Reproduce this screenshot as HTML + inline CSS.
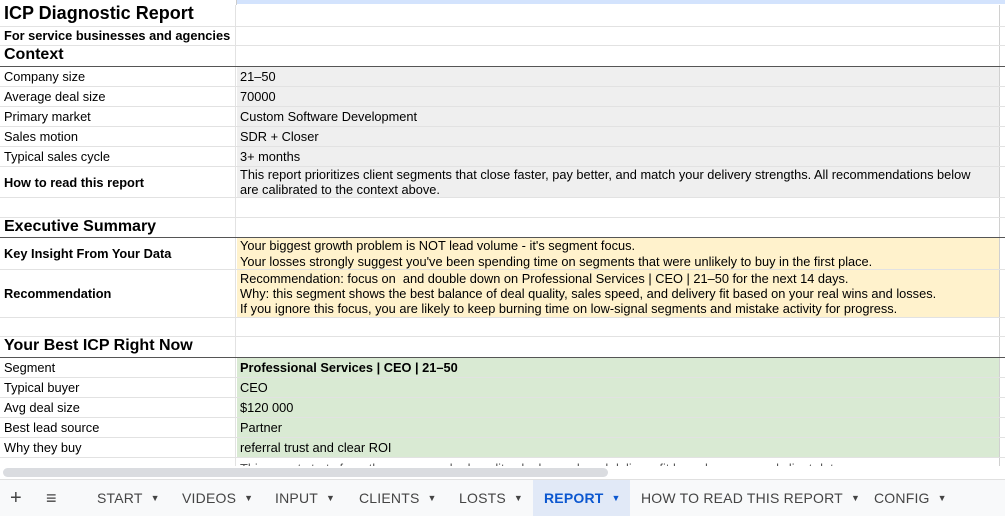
<!DOCTYPE html>
<html><head><meta charset="utf-8"><style>
*{margin:0;padding:0;box-sizing:border-box}
body{width:1005px;height:516px;overflow:hidden;background:#fff;font-family:"Liberation Sans",Arial,sans-serif;font-size:12.8px;color:#000;position:relative}
.r{position:absolute;left:0;width:1005px;border-bottom:1px solid #e2e2e2}
.a,.b{position:absolute;top:0;bottom:0;display:flex;align-items:flex-end;padding-bottom:2px;white-space:nowrap;overflow:hidden}
.a{left:0;width:236px;padding-left:4px;border-right:1px solid #e2e2e2}
.b{left:237px;width:763px;padding-left:3px;border-right:1px solid #d0d0d0}
.m{align-items:center;padding-bottom:0;line-height:15px;white-space:normal}
.g{background:#efefef}.y{background:#fff2cc}.gr{background:#d9ead3}
.bd{font-weight:bold}
.dk{border-bottom:1px solid #555}
.tab{position:absolute;top:480px;height:36px;display:flex;align-items:center;font-size:14px;color:#444;letter-spacing:0.2px}
.tab span{font-size:9px;margin-left:8px}
</style></head><body>
<div class="r" style="top:0;height:5px;border:none"><div style="position:absolute;left:237px;width:768px;height:4px;background:#d3e3fd"></div><div style="position:absolute;left:236px;width:1px;height:5px;background:#ccc"></div></div>
<div class="r" style="top:5px;height:22px"><div class="a bd" style="font-size:18px;padding-bottom:2px">ICP Diagnostic Report</div><div class="b"></div></div>
<div class="r" style="top:27px;height:19px"><div class="a bd">For service businesses and agencies</div><div class="b"></div></div>
<div class="r dk" style="top:46px;height:21px"><div class="a bd" style="font-size:16px">Context</div><div class="b"></div></div>
<div class="r" style="top:67px;height:20px"><div class="a">Company size</div><div class="b g">21–50</div></div>
<div class="r" style="top:87px;height:20px"><div class="a">Average deal size</div><div class="b g">70000</div></div>
<div class="r" style="top:107px;height:20px"><div class="a">Primary market</div><div class="b g">Custom Software Development</div></div>
<div class="r" style="top:127px;height:20px"><div class="a">Sales motion</div><div class="b g">SDR + Closer</div></div>
<div class="r" style="top:147px;height:20px"><div class="a">Typical sales cycle</div><div class="b g">3+ months</div></div>
<div class="r" style="top:167px;height:31px"><div class="a bd m">How to read this report</div><div class="b g m" style="padding-right:20px">This report prioritizes client segments that close faster, pay better, and match your delivery strengths. All recommendations below<br>are calibrated to the context above.</div></div>
<div class="r" style="top:198px;height:20px"><div class="a"></div><div class="b"></div></div>
<div class="r dk" style="top:218px;height:20px"><div class="a bd" style="font-size:16px;padding-bottom:1px">Executive Summary</div><div class="b"></div></div>
<div class="r" style="top:238px;height:32px"><div class="a bd m">Key Insight From Your Data</div><div class="b y m" style="line-height:16px">Your biggest growth problem is NOT lead volume - it's segment focus.<br>Your losses strongly suggest you've been spending time on segments that were unlikely to buy in the first place.</div></div>
<div class="r" style="top:270px;height:48px"><div class="a bd m">Recommendation</div><div class="b y m">Recommendation: focus on &nbsp;and double down on Professional Services | CEO | 21–50 for the next 14 days.<br>Why: this segment shows the best balance of deal quality, sales speed, and delivery fit based on your real wins and losses.<br>If you ignore this focus, you are likely to keep burning time on low-signal segments and mistake activity for progress.</div></div>
<div class="r" style="top:318px;height:19px"><div class="a"></div><div class="b"></div></div>
<div class="r dk" style="top:337px;height:21px"><div class="a bd" style="font-size:16px">Your Best ICP Right Now</div><div class="b"></div></div>
<div class="r" style="top:358px;height:20px"><div class="a">Segment</div><div class="b gr bd">Professional Services | CEO | 21–50</div></div>
<div class="r" style="top:378px;height:20px"><div class="a">Typical buyer</div><div class="b gr">CEO</div></div>
<div class="r" style="top:398px;height:20px"><div class="a">Avg deal size</div><div class="b gr">$120 000</div></div>
<div class="r" style="top:418px;height:20px"><div class="a">Best lead source</div><div class="b gr">Partner</div></div>
<div class="r" style="top:438px;height:20px"><div class="a">Why they buy</div><div class="b gr">referral trust and clear ROI</div></div>
<div class="r" style="top:458px;height:20px;border:none"><div class="a"></div><div class="b" style="align-items:flex-start;padding-top:3px;color:#555">This report starts from the cause, ranked quality, deal speed, and delivery fit based on your real client data</div></div>
<div style="position:absolute;top:466px;left:0;width:1005px;height:14px;background:#fff;border-bottom:1px solid #e0e0e0"></div>
<div style="position:absolute;top:468px;left:3px;width:605px;height:9px;background:#dadce0;border-radius:5px"></div>
<div style="position:absolute;top:480px;left:0;width:1005px;height:36px;background:#f8f9fa"></div>
<div class="tab" style="left:10px;font-size:20px;color:#444">+</div>
<div class="tab" style="left:46px;font-size:18px;color:#444">≡</div>
<div class="tab" style="left:97px">START<span>▼</span></div>
<div class="tab" style="left:182px">VIDEOS<span>▼</span></div>
<div class="tab" style="left:275px">INPUT<span>▼</span></div>
<div class="tab" style="left:359px">CLIENTS<span>▼</span></div>
<div class="tab" style="left:459px">LOSTS<span>▼</span></div>
<div style="position:absolute;top:480px;left:533px;width:97px;height:36px;background:#e1e9f7"></div>
<div class="tab" style="left:544px;color:#0b57d0;font-weight:bold">REPORT<span>▼</span></div>
<div class="tab" style="left:641px">HOW TO READ THIS REPORT<span>▼</span></div>
<div class="tab" style="left:874px">CONFIG<span>▼</span></div>
</body></html>
